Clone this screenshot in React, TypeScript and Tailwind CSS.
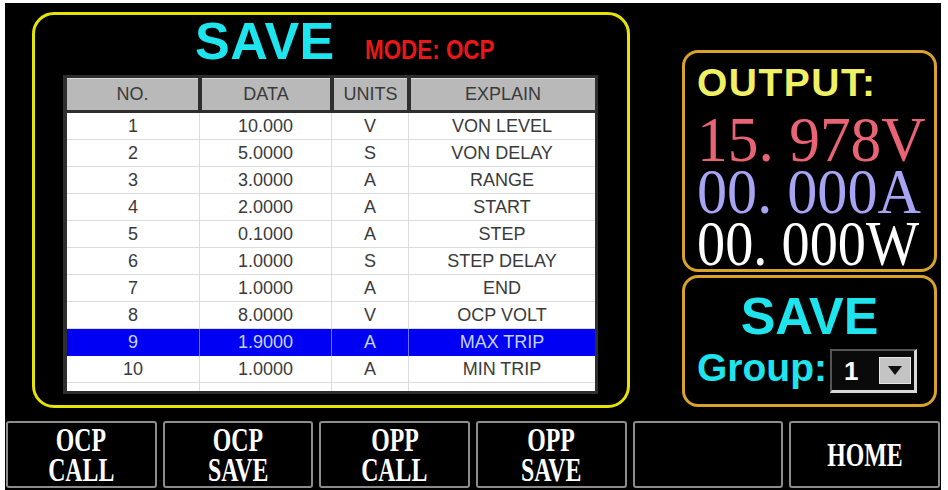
const rows = [
  ["1", "10.000", "V", "VON LEVEL"],
  ["2", "5.0000", "S", "VON DELAY"],
  ["3", "3.0000", "A", "RANGE"],
  ["4", "2.0000", "A", "START"],
  ["5", "0.1000", "A", "STEP"],
  ["6", "1.0000", "S", "STEP DELAY"],
  ["7", "1.0000", "A", "END"],
  ["8", "8.0000", "V", "OCP VOLT"],
  ["9", "1.9000", "A", "MAX TRIP"],
  ["10", "1.0000", "A", "MIN TRIP"],
];

const buttons = [["OCP", "CALL"], ["OCP", "SAVE"], ["OPP", "CALL"], ["OPP", "SAVE"], [], ["HOME"]];

const sans = "font-['Liberation_Sans',Arial,sans-serif]";
const serif = "font-['Liberation_Serif','Times_New_Roman',serif]";

function ParamTable() {
  return (
    <div className={`ml-[28px] mt-[10px] w-[535px] h-[319px] flex flex-col bg-white border-l-[4px] border-t-[3px] border-r-[3px] border-b-[3px] border-[#2e2e2e] text-[18px] text-[#3a3a3a] ${sans}`}>
      <div className="grid grid-cols-[131px_128px_73px_184px] gap-x-[4px] bg-[#2e2e2e] h-[35px] pb-[3px]">
        {["NO.", "DATA", "UNITS", "EXPLAIN"].map((h) => (
          <div key={h} className="bg-[#b9b9b9] border-t border-[#dadada] flex items-center justify-center">
            {h}
          </div>
        ))}
      </div>
      {rows.map((r) => {
        const sel = r[0] === "9";
        return (
          <div
            key={r[0]}
            className={`grid grid-cols-[133px_132px_77px_186px] h-[27px] border-b ${sel ? "bg-[#0000f4] text-[#c4d4ff] border-[#0000f4]" : "border-[#dcdcdc]"}`}
          >
            {r.map((c, i) => (
              <div
                key={i}
                className={`flex items-center justify-center ${i < 3 ? "border-r" : ""} ${sel ? "border-[#7070ff]" : "border-[#dcdcdc]"}`}
              >
                {c}
              </div>
            ))}
          </div>
        );
      })}
      <div className="flex-1 grid grid-cols-[133px_132px_77px_186px]">
        <div className="border-r border-[#dcdcdc]" />
        <div className="border-r border-[#dcdcdc]" />
        <div className="border-r border-[#dcdcdc]" />
        <div />
      </div>
    </div>
  );
}

function GroupSelect() {
  return (
    <div className="ml-[3px] mt-[1px] w-[87px] h-[44px] border-t-[2px] border-l-[2px] border-[#555] border-b-[3px] border-r-[3px] border-b-[#d8d8d8] border-r-[#d8d8d8] bg-[#0a0a0a] flex items-center pl-[12px] pr-[3px]">
      <span className={`text-white font-bold text-[26px] leading-none ${sans}`}>1</span>
      <div className="ml-auto w-[32px] h-[27px] bg-[#c4c4c4] border border-[#e8e8e8] flex items-center justify-center">
        <svg width="14" height="9" viewBox="0 0 14 9">
          <path d="M0 0 H14 L7 9 Z" fill="#111" />
        </svg>
      </div>
    </div>
  );
}

export default function App() {
  return (
    <div className="w-[948px] h-[490px] bg-white pt-[3px] pl-[5px] pr-[7px] overflow-hidden">
      <div className="h-[487px] bg-black flex flex-col">
        <div className="flex h-[418px]">
          <div className="ml-[27px] mt-[9px] w-[598px] h-[396px] border-[3px] border-[#e4e400] rounded-[22px] flex flex-col">
            <div className={`flex items-baseline pl-[160px] h-[50px] leading-none ${sans}`}>
              <span className="text-[52px] font-bold text-[#1ee4ee] tracking-[0.5px]">SAVE</span>
              <span className="ml-[30px] text-[28px] font-bold text-[#e81818] scale-x-[0.8] origin-left">MODE: OCP</span>
            </div>
            <ParamTable />
          </div>

          <div className="ml-[52px] mt-[47px] w-[255px] flex flex-col">
            <div className="h-[222px] border-[3px] border-[#d9a32a] rounded-[16px] pl-[12px] pt-[10px]">
              <div className={`text-[39px] font-bold leading-none text-[#f0f064] tracking-[1.5px] ${sans}`}>OUTPUT:</div>
              <div className={`mt-[12px] text-[64px] leading-[52px] whitespace-pre ${serif}`}>
                <div className="text-[#e86474] scale-x-[0.96] origin-left">15. 978V</div>
                <div className="text-[#a8a4f4] scale-x-[0.94] origin-left">00. 000A</div>
                <div className="text-white scale-x-[0.88] origin-left">00. 000W</div>
              </div>
            </div>
            <div className="mt-[3px] h-[132px] border-[3px] border-[#d9a32a] rounded-[16px] flex flex-col">
              <div className={`pt-[12px] text-center text-[52px] font-bold leading-none text-[#1ee4ee] ${sans}`}>SAVE</div>
              <div className="mt-[6px] pl-[12px] flex items-start">
                <span className={`text-[39px] font-bold leading-none text-[#1ee4ee] ${sans}`}>Group:</span>
                <GroupSelect />
              </div>
            </div>
          </div>
        </div>

        <div className="h-[67px] flex gap-[6px] px-[1px]">
          {buttons.map((b, i) => (
            <div key={i} className="flex-1 border-[2px] border-[#8c8c8c] rounded-[3px] flex flex-col items-center justify-center">
              {b.map((t) => (
                <div key={t} className={`text-white font-bold text-[34px] leading-[30px] scale-x-[0.7] ${serif}`}>
                  {t}
                </div>
              ))}
            </div>
          ))}
        </div>
      </div>
    </div>
  );
}
